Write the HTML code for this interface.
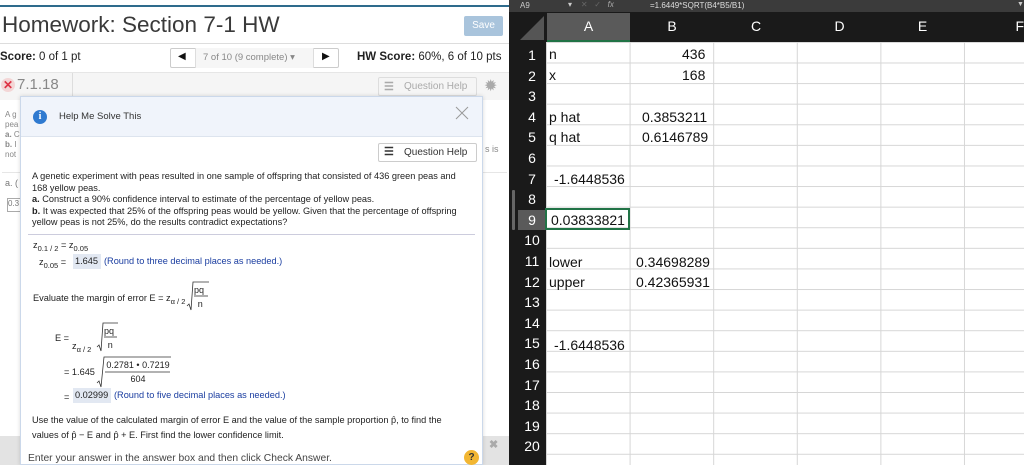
<!DOCTYPE html>
<html><head><style>
*{margin:0;padding:0;box-sizing:border-box}
body{width:1024px;height:465px;overflow:hidden;position:relative;background:#fff;font-family:"Liberation Sans",sans-serif}
.a{position:absolute;white-space:nowrap}
.l{color:#333}
.xl{font-family:"Liberation Sans",sans-serif;font-size:14px;color:#111}
.sq{position:absolute;border-top:1px solid #333;font-size:9px;text-align:center;line-height:13px;color:#222}
</style></head><body>
<!-- LEFT PANEL -->
<div class="a" style="left:0;top:0;width:509px;height:465px;background:#fff"></div>
<div class="a" style="left:0;top:5px;width:509px;height:2px;background:#2e6b8c"></div>
<div class="a l" style="left:2px;top:12px;font-size:22.5px;color:#3a3a3a">Homework: Section 7-1 HW</div>
<div class="a" style="left:464px;top:16px;width:39px;height:20px;background:#a9c4dc;border-radius:2px;color:#fff;font-size:10px;text-align:center;line-height:20px">Save</div>
<div class="a" style="left:0;top:43px;width:509px;height:1px;background:#ddd"></div>
<div class="a" style="left:0;top:51px;font-size:11.5px;color:#222"><b>Score:</b> 0 of 1 pt</div>
<div class="a" style="left:170px;top:48px;width:169px;height:20px;border:1px solid #ccc;border-radius:2px;background:#fff"></div>
<div class="a" style="left:195px;top:48px;width:119px;height:20px;background:#f6f6f6;border-left:1px solid #ddd;border-right:1px solid #ddd"></div>
<div class="a" style="left:178px;top:51px;font-size:10px;color:#111">◀</div>
<div class="a" style="left:203px;top:52px;font-size:9.5px;color:#888">7 of 10 (9 complete) ▾</div>
<div class="a" style="left:322px;top:51px;font-size:10px;color:#111">▶</div>
<div class="a" style="left:357px;top:51px;font-size:11.5px;color:#222"><b>HW Score:</b> 60%, 6 of 10 pts</div>
<div class="a" style="left:0;top:72px;width:509px;height:28px;background:#f5f5f5;border-top:1px solid #e6e6e6"></div>
<div class="a" style="left:72px;top:73px;width:1px;height:26px;background:#ddd"></div>
<div class="a" style="left:1px;top:78px;width:14px;height:14px;border-radius:50%;background:#f3d6d6;color:#d34;font-size:12px;font-weight:bold;text-align:center;line-height:14px">✕</div>
<div class="a" style="left:17px;top:76px;font-size:15px;color:#888">7.1.18</div>
<div class="a" style="left:378px;top:77px;width:99px;height:19px;border:1px solid #ddd;border-radius:2px;font-size:10px;color:#aaa;line-height:17px;padding-left:25px">Question Help</div>
<div class="a" style="left:384px;top:80px;font-size:11px;color:#aaa;font-weight:bold">☰</div>
<div class="a" style="left:484px;top:76px;font-size:16px;color:#aaa">✹</div>
<div class="a" style="left:5px;top:110px;font-size:8px;color:#888;line-height:10px">A g<br>pea<br><b>a.</b> C<br><b>b.</b> I<br>not</div>
<div class="a" style="left:485px;top:144px;font-size:9px;color:#888">s is</div>
<div class="a" style="left:2px;top:172px;width:505px;height:1px;background:#e6e6e6"></div>
<div class="a" style="left:5px;top:178px;font-size:9px;color:#777">a. (</div>
<div class="a" style="left:7px;top:198px;width:15px;height:14px;border:1px solid #aaa;font-size:8px;color:#777">0.3</div>
<div class="a" style="left:0;top:436px;width:509px;height:29px;background:#e3e3e3"></div>
<div class="a" style="left:489px;top:438px;font-size:11px;color:#aaa;font-weight:bold">✖</div>
<!-- MODAL -->
<div class="a" style="left:20px;top:96px;width:463px;height:369px;background:#fff;border:1px solid #cbd8ea;box-shadow:0 0 4px rgba(0,0,0,.15)"></div>
<div class="a" style="left:21px;top:97px;width:461px;height:40px;background:#f0f4fb;border-bottom:1px solid #dde4ee"></div>
<div class="a" style="left:33px;top:110px;width:14px;height:14px;border-radius:50%;background:#2f7ad0;color:#fff;font-size:10px;font-weight:bold;text-align:center;line-height:14px;font-family:'Liberation Serif',serif">i</div>
<div class="a" style="left:59px;top:111px;font-size:9.5px;color:#333">Help Me Solve This</div>
<svg class="a" style="left:455px;top:106px" width="14" height="14"><path d="M1 1L13 13M13 1L1 13" stroke="#999" stroke-width="1"/></svg>
<div class="a" style="left:378px;top:143px;width:99px;height:19px;border:1px solid #ccc;border-radius:2px;font-size:10px;color:#333;line-height:17px;padding-left:25px">Question Help</div>
<div class="a" style="left:384px;top:145px;font-size:11px;color:#333;font-weight:bold">☰</div>
<div class="a" style="left:32px;top:171px;font-size:9.2px;color:#222;line-height:11.5px">A genetic experiment with peas resulted in one sample of offspring that consisted of 436 green peas and<br>168 yellow peas.<br><b>a.</b> Construct a 90% confidence interval to estimate of the percentage of yellow peas.<br><b>b.</b> It was expected that 25% of the offspring peas would be yellow. Given that the percentage of offspring<br>yellow peas is not 25%, do the results contradict expectations?</div>
<div class="a" style="left:28px;top:234px;width:447px;height:1px;background:#ccd"></div>
<div class="a" style="left:33px;top:240px;font-size:9.2px;color:#222">z<sub style="font-size:7.5px">0.1 / 2</sub> = z<sub style="font-size:7.5px">0.05</sub></div>
<div class="a" style="left:39px;top:257px;font-size:9.2px;color:#222">z<sub style="font-size:7.5px">0.05</sub> =</div>
<div class="a" style="left:73px;top:254px;width:28px;height:15px;background:#e2e8f2;font-size:9.2px;color:#222;padding:2px 2px">1.645</div>
<div class="a" style="left:104px;top:256px;font-size:9.2px;color:#1a3da0">(Round to three decimal places as needed.)</div>
<div class="a" style="left:33px;top:293px;font-size:9.2px;color:#222">Evaluate the margin of error E = z<sub style="font-size:7.5px">α / 2</sub></div>
<svg class="a" style="left:186px;top:281px" width="24" height="30"><path d="M1 25L3 23L5 29L7 1H23" stroke="#333" fill="none" stroke-width="0.8"/><line x1="8" y1="15" x2="22" y2="15" stroke="#333" stroke-width="0.8"/></svg>
<div class="a" style="left:194px;top:283px;font-size:9px;color:#222;line-height:14px;text-align:center">pq<br>&nbsp;n</div>
<div class="a" style="left:55px;top:333px;font-size:9.2px;color:#222">E =</div>
<div class="a" style="left:72px;top:341px;font-size:9.2px;color:#222">z<sub style="font-size:7.5px">α / 2</sub></div>
<svg class="a" style="left:96px;top:322px" width="24" height="30"><path d="M1 25L3 23L5 29L7 1H22" stroke="#333" fill="none" stroke-width="0.8"/><line x1="8" y1="15" x2="21" y2="15" stroke="#333" stroke-width="0.8"/></svg>
<div class="a" style="left:104px;top:324px;font-size:9px;color:#222;line-height:14px;text-align:center">pq<br>&nbsp;n</div>
<div class="a" style="left:64px;top:367px;font-size:9.2px;color:#222">= 1.645</div>
<svg class="a" style="left:96px;top:356px" width="76" height="32"><path d="M1 27L3 25L5 31L8 1H75" stroke="#333" fill="none" stroke-width="0.8"/><line x1="9" y1="16" x2="74" y2="16" stroke="#333" stroke-width="0.8"/></svg>
<div class="a" style="left:105px;top:358px;width:66px;font-size:9px;color:#222;line-height:14px;text-align:center">0.2781 • 0.7219<br>604</div>
<div class="a" style="left:64px;top:392px;font-size:9.2px;color:#222">=</div>
<div class="a" style="left:73px;top:388px;width:38px;height:15px;background:#e2e8f2;font-size:9.2px;color:#222;padding:2px 2px">0.02999</div>
<div class="a" style="left:114px;top:390px;font-size:9.2px;color:#1a3da0">(Round to five decimal places as needed.)</div>
<div class="a" style="left:32px;top:413px;font-size:9.2px;color:#222;line-height:15px">Use the value of the calculated margin of error E and the value of the sample proportion p̂, to find the<br>values of p̂ − E and p̂ + E. First find the lower confidence limit.</div>
<div class="a" style="left:28px;top:453px;font-size:10.3px;color:#444">Enter your answer in the answer box and then click Check Answer.</div>
<div class="a" style="left:464px;top:450px;width:15px;height:15px;border-radius:50%;background:#f2b632;color:#333;font-size:10px;font-weight:bold;text-align:center;line-height:15px">?</div>
<!-- EXCEL -->
<div class="a" style="left:509px;top:0;width:515px;height:465px;background:#1a1a1a"></div>
<div class="a" style="left:509px;top:0;width:515px;height:12px;background:#3b3b3b"></div>
<div class="a" style="left:520px;top:1px;font-size:8px;color:#ccc">A9</div>
<div class="a" style="left:568px;top:0px;font-size:8px;color:#ccc">▾ &nbsp;&nbsp; <span style="color:#666">✕ &nbsp; ✓</span> &nbsp; <i style="color:#aaa">fx</i></div>
<div class="a" style="left:650px;top:1px;font-size:8px;color:#ddd">=1.6449*SQRT(B4*B5/B1)</div>
<div class="a" style="left:1017px;top:1px;font-size:7px;color:#ccc">▼</div>
<div class="a" style="left:546px;top:42px;width:478px;height:423px;background:#fff;
background-image:linear-gradient(to right,#d6d6d6 1px,transparent 1px),linear-gradient(to bottom,#d6d6d6 1px,transparent 1px);
background-size:83.6px 20.6px,100% 20.6px;background-position:83.6px 0,0 20.5px"></div>
<div class="a" style="left:547px;top:13px;width:83px;height:29px;background:#5a5a5a;border-bottom:2px solid #217346"></div>
<div class="a" style="left:520px;top:16px;width:0;height:0;border-left:24px solid transparent;border-bottom:24px solid #555"></div>
<div class="a" style="left:547px;top:18px;width:477px;height:20px;font-size:14px;color:#fff;display:flex">
<span style="width:83px;text-align:center">A</span><span style="width:84px;text-align:center">B</span><span style="width:84px;text-align:center">C</span><span style="width:83px;text-align:center">D</span><span style="width:83px;text-align:center">E</span><span style="width:60px;text-align:right">F</span></div>
<div class="a" style="left:518px;top:42px;width:28px;font-size:14px;color:#fff;text-align:center;line-height:20.6px;padding-top:3px">1<br>2<br>3<br>4<br>5<br>6<br>7<br>8<br><span style="display:block;background:#5a5a5a">9</span>10<br>11<br>12<br>13<br>14<br>15<br>16<br>17<br>18<br>19<br>20</div>
<div class="a xl" style="left:549px;top:46px">n</div>
<div class="a xl" style="left:549px;top:67px">x</div>
<div class="a xl" style="left:549px;top:109px">p hat</div>
<div class="a xl" style="left:549px;top:129px">q hat</div>
<div class="a xl" style="left:682px;top:46px">436</div>
<div class="a xl" style="left:682px;top:67px">168</div>
<div class="a xl" style="left:642px;top:109px">0.3853211</div>
<div class="a xl" style="left:642px;top:129px">0.6146789</div>
<div class="a xl" style="left:554px;top:171px">-1.6448536</div>
<div class="a" style="left:545px;top:208px;width:85px;height:22px;border:2px solid #217346"></div>
<div class="a xl" style="left:551px;top:212px">0.03833821</div>
<div class="a xl" style="left:549px;top:254px">lower</div>
<div class="a xl" style="left:549px;top:274px">upper</div>
<div class="a xl" style="left:636px;top:254px">0.34698289</div>
<div class="a xl" style="left:636px;top:274px">0.42365931</div>
<div class="a xl" style="left:554px;top:337px">-1.6448536</div>
<div class="a" style="left:512px;top:190px;width:3px;height:40px;background:#666;border-radius:1px"></div>
</body></html>
